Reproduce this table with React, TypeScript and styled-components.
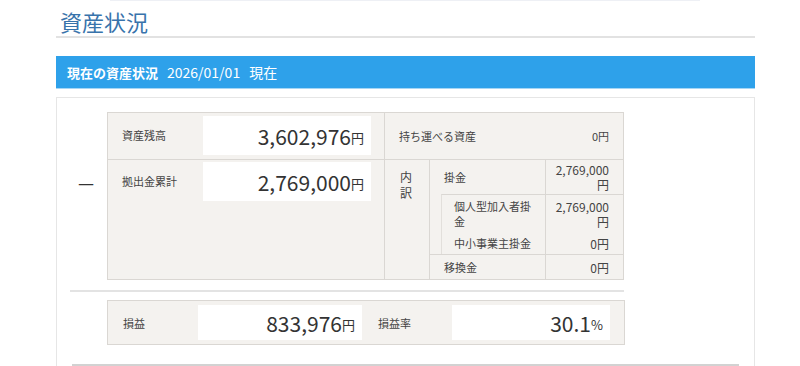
import styled, { createGlobalStyle } from 'styled-components'

const GlobalStyle = createGlobalStyle`
  body {
    margin: 0;
    background: #fff;
    font-family: "Noto Sans CJK JP", "Noto Sans", sans-serif;
    color: #333;
  }
`

const Page = styled.div`
  width: 699px;
  margin-left: 56px;
  padding-top: 1px;
  position: relative;
`

const TopRule = styled.div`
  position: absolute;
  top: 0;
  left: 54px;
  width: 590px;
  height: 1px;
  background: #eef0f5;
`

const Heading = styled.h1`
  margin: 0;
  padding: 6px 0 1px 4px;
  font-size: 22px;
  line-height: 28px;
  font-weight: 400;
  color: #3873ab;
  border-bottom: 2px solid #e2e2e2;
`

const Bar = styled.div`
  margin-top: 18px;
  height: 32px;
  display: flex;
  align-items: center;
  gap: 9px;
  padding-left: 11px;
  background: #2ea1ea;
  border-bottom: 1px solid #a6d6f5;
  color: #fff;
`

const BarTitle = styled.span`
  font-size: 13px;
  font-weight: 700;
`

const BarText = styled.span`
  font-size: 14px;
`

const Panel = styled.div`
  margin-top: 8px;
  border: 1px solid #e6e6e6;
  border-bottom: none;
  padding-top: 14px;
  height: 269px;
  box-sizing: border-box;
`

const Section = styled.div`
  display: flex;
`

const DashCol = styled.div`
  width: 50px;
  display: flex;
  align-items: center;
  padding: 0 0 28px 21px;
  box-sizing: border-box;
  font-size: 18px;
  color: #333;
`

const Table = styled.div`
  width: 517px;
  height: 168px;
  box-sizing: border-box;
  display: flex;
  background: #f4f2ef;
  border: 1px solid #dad7d3;
`

const LeftPart = styled.div`
  width: 276px;
  border-right: 1px solid #dad7d3;
  display: flex;
  flex-direction: column;
`

const MainRow = styled.div<{ $last?: boolean }>`
  display: flex;
  align-items: flex-start;
  padding: ${({ $last }) => ($last ? '2px' : '3px')} 13px 4px 14px;
  border-bottom: ${({ $last }) => ($last ? 'none' : '1px solid #dad7d3')};
  flex: ${({ $last }) => ($last ? 1 : 'none')};
`

const Label = styled.span<{ $w?: number }>`
  width: ${({ $w }) => ($w ? `${$w}px` : 'auto')};
  flex: none;
  font-size: 11px;
  line-height: 39px;
  color: #444;
`

const ValueBox = styled.div<{ $w: number; $h?: number }>`
  width: ${({ $w }) => $w}px;
  height: ${({ $h }) => $h ?? 39}px;
  box-sizing: border-box;
  background: #fff;
  display: flex;
  align-items: center;
  justify-content: flex-end;
  padding-right: 7px;
  font-size: 21px;
  color: #333;
  white-space: nowrap;
`

const Unit = styled.span`
  font-size: 13px;
  margin-top: 4px;
`

const RightPart = styled.div`
  flex: 1;
  display: flex;
  flex-direction: column;
  font-size: 11px;
  color: #444;
`

const PortableRow = styled.div`
  height: 47px;
  display: flex;
  align-items: center;
  justify-content: space-between;
  padding: 0 14px 0 14px;
  border-bottom: 1px solid #dad7d3;
`

const Breakdown = styled.div`
  flex: 1;
  display: flex;
`

const BreakdownHead = styled.div`
  width: 45px;
  flex: none;
  padding: 9px 0 0 15px;
  box-sizing: border-box;
  border-right: 1px solid #dad7d3;
  font-size: 12px;
  line-height: 16px;
`

const SubTable = styled.div`
  flex: 1;
  display: flex;
  flex-direction: column;
`

const SubGroup = styled.div`
  margin-left: 11px;
  border-left: 1px solid #e2dfdb;
  border-top: 1px solid #dad7d3;
`

const SubRow = styled.div<{ $h: number; $top?: boolean }>`
  height: ${({ $h }) => $h}px;
  display: flex;
  border-top: ${({ $top }) => ($top ? '1px solid #dad7d3' : 'none')};
`

const SubLabel = styled.div<{ $pad: number }>`
  flex: 1;
  display: flex;
  align-items: center;
  padding: 0 6px 0 ${({ $pad }) => $pad}px;
  font-size: 11px;
  line-height: 15px;
`

const SubValue = styled.div`
  width: 78px;
  flex: none;
  box-sizing: border-box;
  border-left: 1px solid #dad7d3;
  padding: 0 14px 0 6px;
  display: flex;
  align-items: center;
  justify-content: flex-end;
  text-align: right;
  font-size: 12px;
  line-height: 15px;
`

const Separator = styled.div`
  margin: 10px 0 8px 13px;
  width: 554px;
  height: 2px;
  background: #e3e3e3;
`

const ProfitBox = styled.div`
  margin-left: 50px;
  width: 518px;
  height: 45px;
  box-sizing: border-box;
  display: flex;
  align-items: center;
  padding: 0 14px 0 15px;
  background: #f4f2ef;
  border: 1px solid #dad7d3;
`

const ProfitLabel = styled.span<{ $w: number; $indent?: number }>`
  width: ${({ $w }) => $w}px;
  padding-left: ${({ $indent }) => $indent ?? 0}px;
  box-sizing: border-box;
  flex: none;
  font-size: 11px;
  color: #444;
`

const NextBlock = styled.div`
  margin: 19px 0 0 15px;
  width: 667px;
  height: 6px;
  border-top: 2px solid #d2d2d2;
  background: #f7f7f7;
`

export default function App() {
  return (
    <>
      <GlobalStyle />
      <Page>
        <TopRule />
        <Heading>資産状況</Heading>
        <Bar>
          <BarTitle>現在の資産状況</BarTitle>
          <BarText>2026/01/01</BarText>
          <BarText>現在</BarText>
        </Bar>
        <Panel>
          <Section>
            <DashCol>—</DashCol>
            <Table>
              <LeftPart>
                <MainRow>
                  <Label $w={81}>資産残高</Label>
                  <ValueBox $w={168}>
                    3,602,976<Unit>円</Unit>
                  </ValueBox>
                </MainRow>
                <MainRow $last>
                  <Label $w={81}>拠出金累計</Label>
                  <ValueBox $w={168}>
                    2,769,000<Unit>円</Unit>
                  </ValueBox>
                </MainRow>
              </LeftPart>
              <RightPart>
                <PortableRow>
                  <span>持ち運べる資産</span>
                  <span>0円</span>
                </PortableRow>
                <Breakdown>
                  <BreakdownHead>内<br />訳</BreakdownHead>
                  <SubTable>
                    <SubRow $h={34}>
                      <SubLabel $pad={14}>掛金</SubLabel>
                      <SubValue>2,769,000<br />円</SubValue>
                    </SubRow>
                    <SubGroup>
                      <SubRow $h={37}>
                        <SubLabel $pad={12}>個人型加入者掛金</SubLabel>
                        <SubValue>2,769,000<br />円</SubValue>
                      </SubRow>
                      <SubRow $h={22}>
                        <SubLabel $pad={12}>中小事業主掛金</SubLabel>
                        <SubValue>0円</SubValue>
                      </SubRow>
                    </SubGroup>
                    <SubRow $h={24} $top>
                      <SubLabel $pad={14}>移換金</SubLabel>
                      <SubValue>0円</SubValue>
                    </SubRow>
                  </SubTable>
                </Breakdown>
              </RightPart>
            </Table>
          </Section>
          <Separator />
          <ProfitBox>
            <ProfitLabel $w={75}>損益</ProfitLabel>
            <ValueBox $w={164} $h={35}>
              833,976<Unit>円</Unit>
            </ValueBox>
            <ProfitLabel $w={90} $indent={16}>損益率</ProfitLabel>
            <ValueBox $w={158} $h={35}>
              30.1<Unit>%</Unit>
            </ValueBox>
          </ProfitBox>
          <NextBlock />
        </Panel>
      </Page>
    </>
  )
}
